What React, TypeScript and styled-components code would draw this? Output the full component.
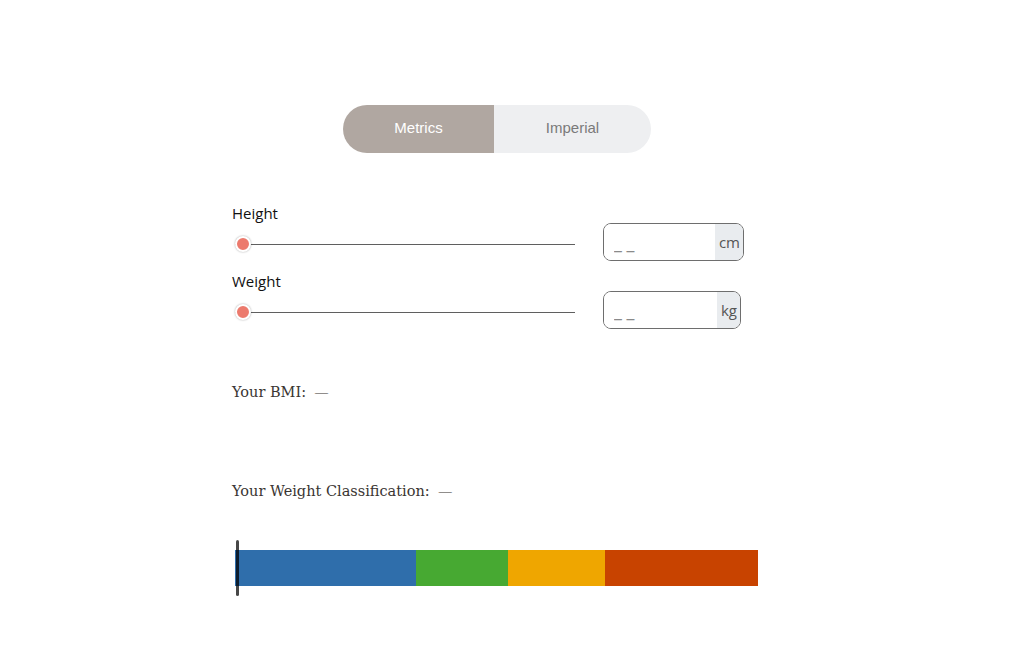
import styled, { createGlobalStyle } from "styled-components";

const GlobalStyle = createGlobalStyle`
  html, body {
    margin: 0;
    padding: 0;
    background: #ffffff;
  }
`;

const segments = [
  { color: "#2f6eab", width: 181 },
  { color: "#47a932", width: 92 },
  { color: "#efa600", width: 97 },
  { color: "#c84300", width: 153 },
];

function MeasureRow({ label, unit, boxWidth }: { label: string; unit: string; boxWidth: number }) {
  return (
    <Row>
      <Label>{label}</Label>
      <Controls>
        <Range type="range" min={0} max={100} defaultValue={0} />
        <InputGroup $width={boxWidth}>
          <NumberInput placeholder="_ _" />
          <Unit>{unit}</Unit>
        </InputGroup>
      </Controls>
    </Row>
  );
}

export default function App() {
  return (
    <>
      <GlobalStyle />
      <Page>
        <Toggle>
          <ToggleButton $active>Metrics</ToggleButton>
          <ToggleButton $active={false}>Imperial</ToggleButton>
        </Toggle>

        <Form>
          <MeasureRow label="Height" unit="cm" boxWidth={141} />
          <MeasureRow label="Weight" unit="kg" boxWidth={138} />
        </Form>

        <Result $top={51}>
          Your BMI:<Dash>—</Dash>
        </Result>
        <Result $top={75}>
          Your Weight Classification:<Dash>—</Dash>
        </Result>

        <Scale>
          {segments.map((s) => (
            <Segment key={s.color} $color={s.color} $width={s.width} />
          ))}
          <Marker />
        </Scale>
      </Page>
    </>
  );
}

const Page = styled.main`
  display: flex;
  flex-direction: column;

  width: 526px;
  padding: 105px 0 59px 232px;
`;

const Toggle = styled.div`
  display: flex;
  align-self: flex-start;

  margin-left: 111px;

  border-radius: 24px;
  overflow: hidden;
`;

const ToggleButton = styled.button<{ $active: boolean }>`
  display: flex;
  justify-content: center;
  align-items: center;

  width: ${({ $active }) => ($active ? "151px" : "157px")};
  height: 48px;
  padding: 0 0 3px;

  border: none;

  color: ${({ $active }) => ($active ? "#ffffff" : "#7a7a7a")};
  background-color: ${({ $active }) => ($active ? "#b0a7a1" : "#eeeff1")};

  font-family: "Liberation Sans", Arial, sans-serif;
  font-size: 15px;
`;

const Form = styled.section`
  display: flex;
  flex-direction: column;
  gap: 11px;

  margin-top: 51px;
`;

const Row = styled.div`
  display: flex;
  flex-direction: column;
`;

const Label = styled.label`
  display: flex;

  color: #111111;

  font-family: "Open Sans", sans-serif;
  font-size: 15px;
  line-height: 19px;
`;

const Controls = styled.div`
  display: flex;
  align-items: center;
  gap: 28px;
`;

const Range = styled.input`
  -webkit-appearance: none;
  appearance: none;

  width: 340px;
  height: 16px;
  margin: 4px 0 0 3px;

  background: transparent;

  &::-webkit-slider-runnable-track {
    height: 1px;

    background: #5f5f5f;
  }

  &::-webkit-slider-thumb {
    -webkit-appearance: none;

    width: 16px;
    height: 16px;
    margin-top: -8px;

    border: 2px solid #ffffff;
    border-radius: 50%;

    background: #ec7a6d;
    box-shadow: 0 0 2px rgba(0, 0, 0, 0.35);
    box-sizing: border-box;
  }
`;

const InputGroup = styled.div<{ $width: number }>`
  display: flex;

  width: ${({ $width }) => $width}px;
  height: 38px;

  border: 1px solid #6e6e6e;
  border-radius: 8px;
  overflow: hidden;
  box-sizing: border-box;
`;

const NumberInput = styled.input`
  flex: 1;
  min-width: 0;

  padding: 0 0 0 10px;

  border: none;
  outline: none;

  color: #555555;

  font-family: "Open Sans", sans-serif;
  font-size: 18px;

  &::placeholder {
    color: #8a8a8a;
  }
`;

const Unit = styled.span`
  display: flex;
  align-items: center;
  justify-content: center;

  padding: 0 3px 0 4px;

  color: #555555;
  background-color: #e9ecef;

  font-family: "Open Sans", sans-serif;
  font-size: 15px;
`;

const Result = styled.p<{ $top: number }>`
  display: flex;
  align-items: center;

  margin: ${({ $top }) => $top}px 0 0;

  color: #3a3532;

  font-family: "DejaVu Serif", "Liberation Serif", serif;
  font-size: 14.5px;
  line-height: 24px;
`;

const Dash = styled.span`
  margin-left: 9px;

  font-family: "Liberation Serif", serif;
  font-size: 13px;
`;

const Scale = styled.div`
  display: flex;

  height: 36px;
  margin: 47px 0 0 3px;
  position: relative;
`;

const Segment = styled.div<{ $color: string; $width: number }>`
  width: ${({ $width }) => $width}px;
  height: 100%;

  background-color: ${({ $color }) => $color};
`;

const Marker = styled.span`
  position: absolute;
  left: 1px;
  top: -10px;
  z-index: 1;

  width: 3px;
  height: 56px;

  border-radius: 2px;

  background-color: rgba(0, 0, 0, 0.72);
`;
